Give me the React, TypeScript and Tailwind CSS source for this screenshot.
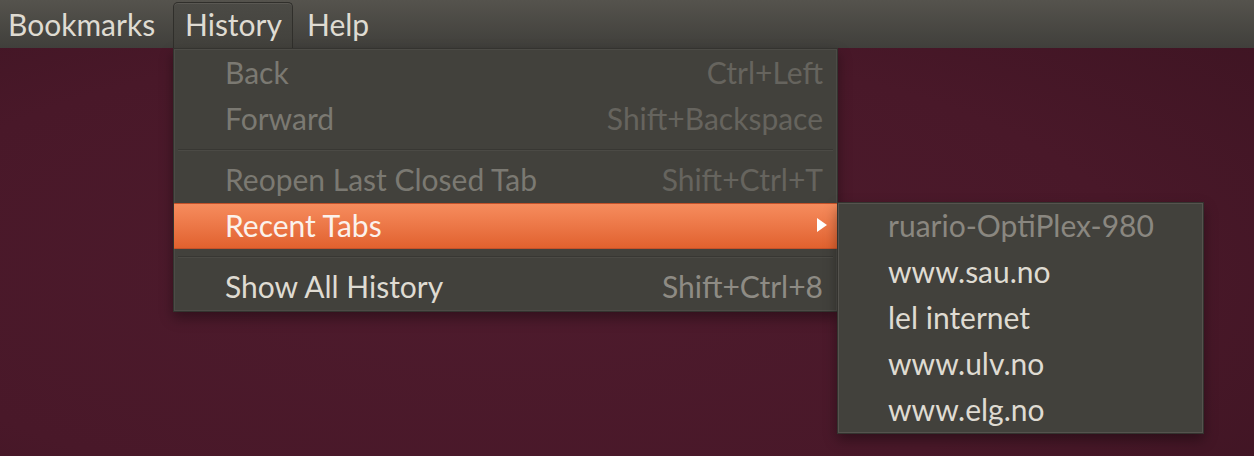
const font = { fontFamily: "Lato, 'Open Sans', sans-serif" };

type Item =
  | { kind: "item"; label: string; shortcut?: string; disabled?: boolean; active?: boolean; submenu?: boolean }
  | { kind: "sep" };

const items: Item[] = [
  { kind: "item", label: "Back", shortcut: "Ctrl+Left", disabled: true },
  { kind: "item", label: "Forward", shortcut: "Shift+Backspace", disabled: true },
  { kind: "sep" },
  { kind: "item", label: "Reopen Last Closed Tab", shortcut: "Shift+Ctrl+T", disabled: true },
  { kind: "item", label: "Recent Tabs", active: true, submenu: true },
  { kind: "sep" },
  { kind: "item", label: "Show All History", shortcut: "Shift+Ctrl+8" },
];

const recent = [
  { label: "ruario-OptiPlex-980", disabled: true },
  { label: "www.sau.no" },
  { label: "lel internet" },
  { label: "www.ulv.no" },
  { label: "www.elg.no" },
];

export default function App() {
  return (
    <div
      className="w-[1254px] h-[456px] overflow-hidden bg-[radial-gradient(ellipse_at_40%_60%,#4e1b2d_0%,#491829_60%,#3d1422_100%)] text-[30px] leading-none"
      style={font}
    >
      {/* Menubar */}
      <div className="h-[48px] flex items-end bg-gradient-to-b from-[#55534d] to-[#403f3b] text-[#dfdbd2]">
        <div className="h-[46px] flex items-center pl-2 pb-[3px] w-[173px]">Bookmarks</div>
        <div className="h-[46px] flex items-center pb-[3px] px-[11px] w-[120px] rounded-t-[5px] border border-b-0 border-[#302f2b] bg-gradient-to-b from-[#4b4a45] to-[#42413c] shadow-[inset_0_1px_0_#5a5853]">
          History
        </div>
        <div className="h-[46px] flex items-center pb-[3px] pl-[14px]">Help</div>
      </div>

      <div className="flex items-start">
        {/* History menu */}
        <div className="ml-[173px] w-[665px] bg-[#42413c] border border-[#34332f] shadow-[inset_0_0_0_1px_#4c4b46,0_6px_12px_rgba(0,0,0,0.35)] pt-[1px] pb-[1px]">
          {items.map((it, i) =>
            it.kind === "sep" ? (
              <div key={i} className="h-[15px] flex items-center px-[4px]">
                <div className="h-[2px] w-full bg-[#383733] border-b border-[#4b4a45]" />
              </div>
            ) : (
              <div
                key={i}
                className={
                  it.active
                    ? "h-[46px] flex items-center pb-[3px] pl-[51px] pr-[10px] bg-gradient-to-b from-[#f68c5d] to-[#e1612e] border-y border-[#c4522a] text-[#fbf2ec]"
                    : "h-[46px] flex items-center pb-[3px] pl-[51px] pr-[14px]"
                }
              >
                <span className={it.active ? "" : it.disabled ? "text-[#7b7972]" : "text-[#dfdbd2]"}>
                  {it.label}
                </span>
                <span className="flex-1" />
                {it.shortcut && (
                  <span className={it.disabled ? "text-[#66645e]" : "text-[#8e8b84]"}>{it.shortcut}</span>
                )}
                {it.submenu && (
                  <span className="w-0 h-0 border-l-[10px] border-l-white border-y-[7px] border-y-transparent" />
                )}
              </div>
            )
          )}
        </div>

        {/* Recent tabs submenu */}
        <div className="mt-[154px] -ml-[1px] w-[367px] bg-[#42413c] border border-[#34332f] shadow-[inset_0_0_0_1px_#55534e,0_6px_12px_rgba(0,0,0,0.35)]">
          {recent.map((r) => (
            <div
              key={r.label}
              className={`h-[46px] flex items-center pb-[3px] pl-[50px] ${r.disabled ? "text-[#8a8780]" : "text-[#dfdbd2]"}`}
            >
              {r.label}
            </div>
          ))}
        </div>
      </div>
    </div>
  );
}
